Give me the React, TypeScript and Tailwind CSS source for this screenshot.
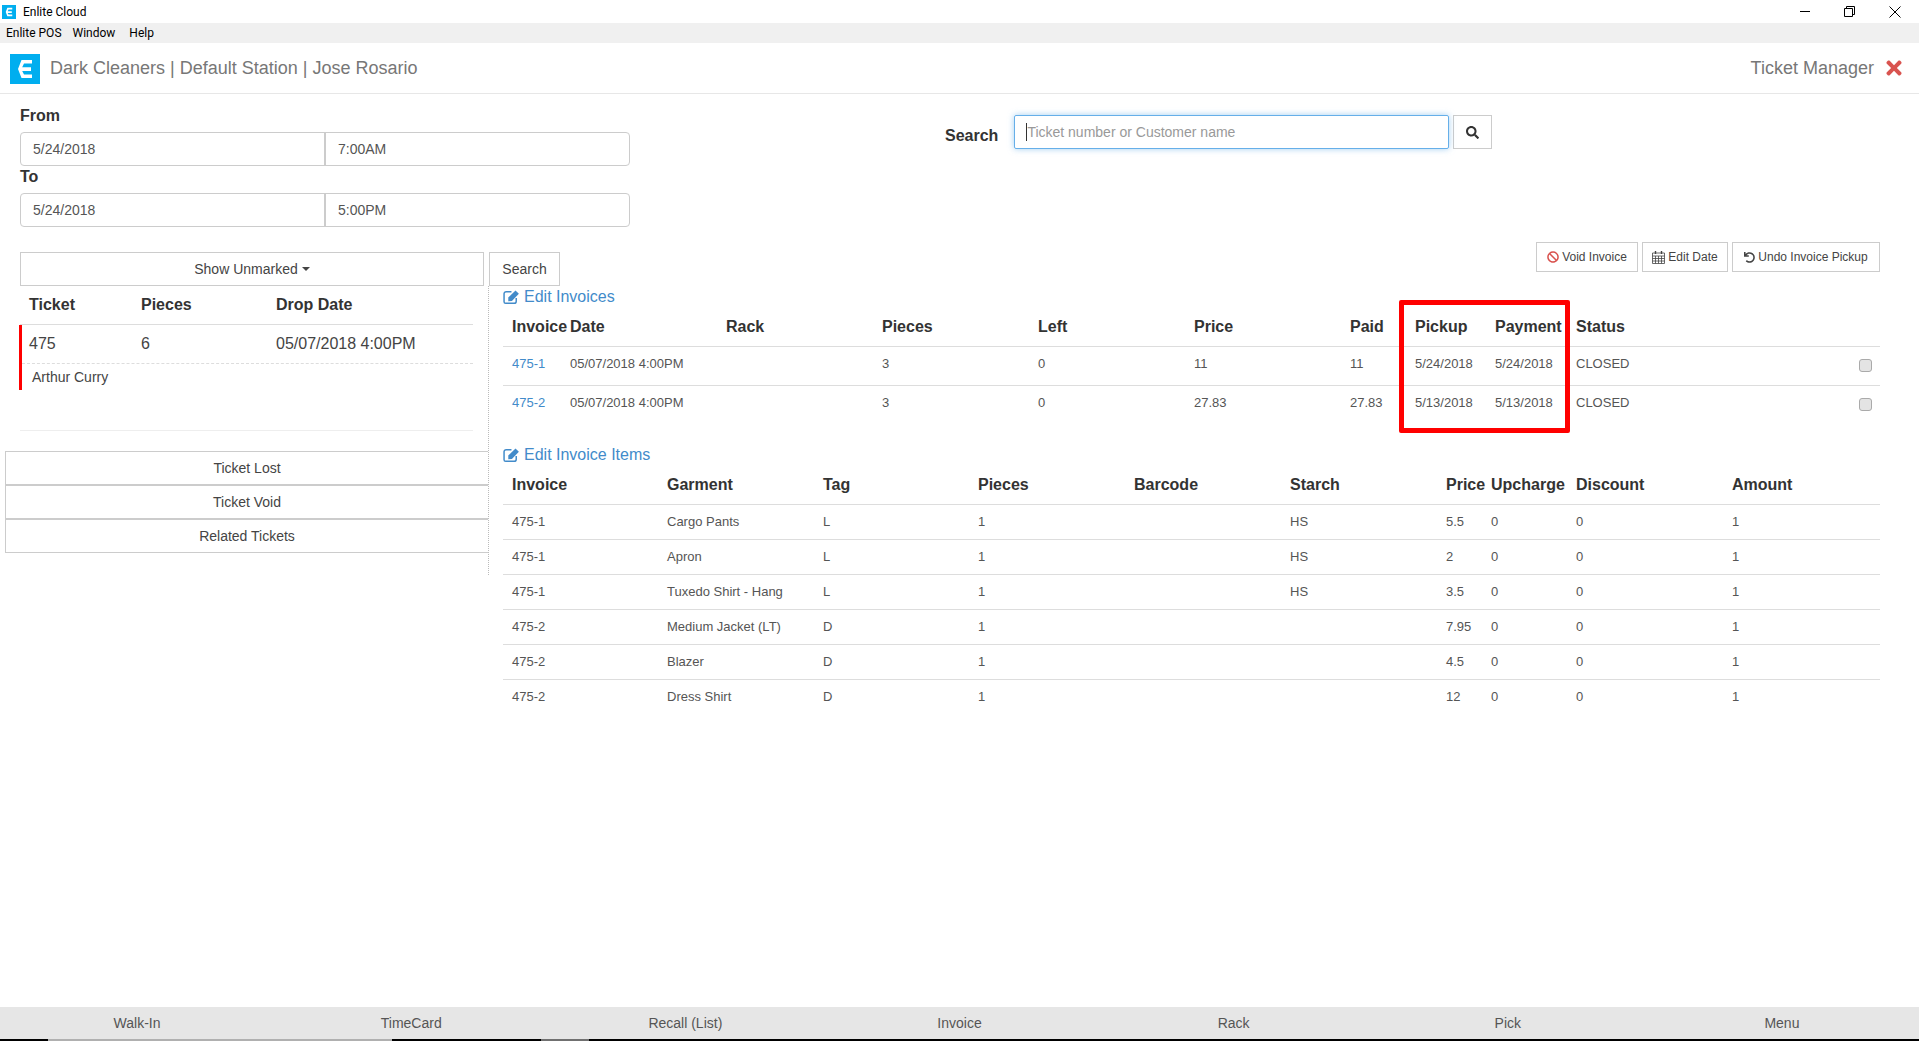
import { FaBan, FaSearch, FaTimes, FaUndo } from "react-icons/fa";

const invoices = [
  { id: "475-1", date: "05/07/2018 4:00PM", pieces: "3", left: "0", price: "11", paid: "11", pickup: "5/24/2018", payment: "5/24/2018" },
  { id: "475-2", date: "05/07/2018 4:00PM", pieces: "3", left: "0", price: "27.83", paid: "27.83", pickup: "5/13/2018", payment: "5/13/2018" },
];

const items = [
  { id: "475-1", garment: "Cargo Pants", tag: "L", starch: "HS", price: "5.5" },
  { id: "475-1", garment: "Apron", tag: "L", starch: "HS", price: "2" },
  { id: "475-1", garment: "Tuxedo Shirt - Hang", tag: "L", starch: "HS", price: "3.5" },
  { id: "475-2", garment: "Medium Jacket (LT)", tag: "D", starch: "", price: "7.95" },
  { id: "475-2", garment: "Blazer", tag: "D", starch: "", price: "4.5" },
  { id: "475-2", garment: "Dress Shirt", tag: "D", starch: "", price: "12" },
];

const invoiceCols = "grid grid-cols-[58px_156px_156px_156px_156px_156px_65px_80px_81px_1fr] pl-[9px]";
const itemCols = "grid grid-cols-[155px_156px_155px_156px_156px_156px_45px_85px_156px_1fr] pl-[9px]";

function Logo({ size }: { size: number }) {
  return (
    <svg width={size} height={size} viewBox="0 0 30 30" className="shrink-0">
      <rect width="30" height="30" fill="#00aeef" />
      <path d="M22 6H11.5L8 15l3.5 9H22v-3.6H14L12.2 17H21v-3.8h-8.8L14 9.600h8z" fill="#fff" />
    </svg>
  );
}

function EditIcon() {
  return (
    <svg width="18" height="16" viewBox="0 0 17 14" className="shrink-0">
      <path d="M8 2H3a2 2 0 0 0-2 2v7.500a1.500 1.500 0 0 0 1.500 1.500h8a2 2 0 0 0 2-2V8" fill="none" stroke="currentColor" strokeWidth="1.4" />
      <path d="M5 7.500 11.800.9 15 4 8.400 10.800 5 11z" fill="currentColor" />
    </svg>
  );
}

function CalendarIcon() {
  return (
    <svg width="13" height="13" viewBox="0 0 13 13" fill="none" stroke="#444" className="shrink-0">
      <path d="M.5 2h12v10.500H.5zM.5 5h12M.5 7.500h12M.5 10h12M3.500 5v7.500M6.500 5v7.500M9.500 5v7.500" strokeWidth="0.8" />
      <path d="M3.500 0v3M9.500 0v3" strokeWidth="1.4" />
    </svg>
  );
}

function DateRange({ label, date, time }: { label: string; date: string; time: string }) {
  return (
    <div>
      <div className="h-5 pt-px text-base leading-5 font-bold text-[#333]">{label}</div>
      <div className="mt-[7px] flex h-[34px] w-[610px] rounded border border-[#ccc] text-sm text-[#555]">
        <input readOnly defaultValue={date} className="w-[305px] border-r-2 border-[#ccc] pl-3 outline-none" />
        <input readOnly defaultValue={time} className="flex-1 pl-3 outline-none" />
      </div>
    </div>
  );
}

function SideButton({ children }: { children: string }) {
  return (
    <button className="h-[34px] border-y border-l border-[#ccc] text-sm text-[#444]">
      {children}
    </button>
  );
}

function ActionButton({ icon, label, width }: { icon: React.ReactNode; label: string; width: string }) {
  return (
    <button className={`flex h-[30px] items-center justify-center gap-[3px] border border-[#ccc] text-xs text-[#444] ${width}`}>
      {icon}
      {label}
    </button>
  );
}

export default function App() {
  return (
    <div className="flex h-[1041px] flex-col overflow-hidden bg-white font-['Liberation_Sans',sans-serif] text-[#333]">
      {/* window chrome */}
      <div className="flex h-[23px] items-center font-['Roboto',sans-serif] text-xs text-black">
        <div className="ml-[2px]">
          <Logo size={14} />
        </div>
        <span className="ml-[7px] flex-1">Enlite Cloud</span>
        <div className="flex items-center gap-[34px] pr-[18px]">
          <span className="h-px w-[10px] bg-black" />
          <svg width="11" height="11" viewBox="0 0 11 11" fill="none" stroke="#000">
            <path d="M.5 2.500h8v8h-8zM2.500 2.500v-2h8v8h-2" />
          </svg>
          <svg width="12" height="12" viewBox="0 0 12 12" fill="none" stroke="#000">
            <path d="M.5.5l11 11M11.500.5l-11 11" />
          </svg>
        </div>
      </div>
      <div className="flex h-5 items-center gap-[11px] bg-[#f0f0f0] pl-[6px] font-['Roboto',sans-serif] text-xs text-black">
        <span>Enlite POS</span>
        <span>Window</span>
        <span className="ml-[3px]">Help</span>
      </div>

      {/* header */}
      <div className="flex h-[51px] shrink-0 items-center border-b border-[#e7e7e7] pr-[14px] pl-[10px] text-lg text-[#777]">
        <div className="mt-[2px]">
          <Logo size={30} />
        </div>
        <span className="ml-[10px] flex-1">Dark Cleaners | Default Station | Jose Rosario</span>
        <span>Ticket Manager</span>
        <FaTimes className="ml-[9px] text-[#d9534f]" size={22} />
      </div>

      {/* date range + search */}
      <div className="flex shrink-0 pt-[11px] pl-5">
        <div className="flex flex-col">
          <DateRange label="From" date="5/24/2018" time="7:00AM" />
          <DateRange label="To" date="5/24/2018" time="5:00PM" />
        </div>
        <div className="ml-[315px] flex">
          <span className="mt-[21px] text-base leading-5 font-bold">Search</span>
          <div className="relative mt-[10px] ml-[16px] h-[34px]">
            <input
              readOnly
              placeholder="Ticket number or Customer name"
              className="h-[34px] w-[435px] rounded-[2px] border border-[#66afe9] pl-3 text-sm shadow-[0_0_6px_rgba(102,175,233,0.6)] outline-none placeholder:text-[#999]"
            />
            <span className="absolute top-[8px] left-[12px] h-[18px] w-px bg-[#333]" />
          </div>
          <button className="mt-[10px] ml-[4px] flex h-[34px] w-[39px] items-center justify-center border border-[#ccc]">
            <FaSearch size={13} className="text-[#333]" />
          </button>
        </div>
      </div>

      {/* body */}
      <div className="flex flex-1">
        <div className="flex w-[489px] shrink-0 flex-col pt-[25px]">
          <div className="ml-5 flex h-[34px] w-[464px] items-center justify-center gap-1 border border-[#ccc] text-sm text-[#444]">
            Show Unmarked
            <span className="border-x-4 border-t-4 border-x-transparent border-t-[#444]" />
          </div>
          <div className="flex h-[289px] flex-col border-r border-dotted border-[#bbb]">
            <div className="mr-[15px] ml-5">
              <div className="grid h-[39px] grid-cols-[112px_135px_1fr] items-center border-b border-[#ddd] pb-[1px] pl-[9px] text-base font-bold">
                <span>Ticket</span>
                <span>Pieces</span>
                <span>Drop Date</span>
              </div>
              <div className="-ml-px h-[65px] border-l-[3px] border-[#f00]">
                <div className="grid h-[39px] grid-cols-[112px_135px_1fr] items-center border-b border-dashed border-[#ddd] pl-[7px] text-base text-[#444]">
                  <span>475</span>
                  <span>6</span>
                  <span>05/07/2018 4:00PM</span>
                </div>
                <div className="pt-[3px] pl-[10px] text-sm text-[#444]">Arthur Curry</div>
              </div>
              <div className="mt-[40px] border-b border-[#eee]" />
            </div>
            <div className="mt-[20px] ml-[5px] flex flex-col">
              <SideButton>Ticket Lost</SideButton>
              <SideButton>Ticket Void</SideButton>
              <SideButton>Related Tickets</SideButton>
            </div>
          </div>
        </div>

        <div className="w-[1391px] pt-[15px]">
          <div className="flex h-[44px] items-start justify-between">
            <button className="mt-[10px] h-[34px] w-[71px] border border-[#ccc] text-sm text-[#444]">Search</button>
            <div className="flex gap-1">
              <ActionButton icon={<FaBan size={12} className="text-[#d9534f]" />} label="Void Invoice" width="w-[102px]" />
              <ActionButton icon={<CalendarIcon />} label="Edit Date" width="w-[86px]" />
              <ActionButton icon={<FaUndo size={11} />} label="Undo Invoice Pickup" width="w-[148px]" />
            </div>
          </div>

          <div className="relative ml-[14px] w-[1377px]">
            <div className="flex h-[22px] items-center gap-[3px] text-base text-[#428bca]">
              <EditIcon />
              Edit Invoices
            </div>
            <div className={`${invoiceCols} h-[39px] items-center border-b border-[#ddd] text-base font-bold`}>
              <span>Invoice</span>
              <span>Date</span>
              <span>Rack</span>
              <span>Pieces</span>
              <span>Left</span>
              <span>Price</span>
              <span>Paid</span>
              <span>Pickup</span>
              <span>Payment</span>
              <span>Status</span>
            </div>
            {invoices.map((row, i) => (
              <div
                key={row.id}
                className={`${invoiceCols} h-[39px] pt-[8px] text-[13px] leading-[18px] text-[#555] ${i === 0 ? "border-b border-[#ddd]" : ""}`}
              >
                <span className="text-[#428bca]">{row.id}</span>
                <span>{row.date}</span>
                <span />
                <span>{row.pieces}</span>
                <span>{row.left}</span>
                <span>{row.price}</span>
                <span>{row.paid}</span>
                <span>{row.pickup}</span>
                <span>{row.payment}</span>
                <span className="flex justify-between pr-[8px]">
                  CLOSED
                  <span className="mt-[4px] h-[13px] w-[13px] rounded-[3px] border border-[#aaa] bg-[#e4e4e4]" />
                </span>
              </div>
            ))}

            {/* red highlight drawn over the screenshot */}
            <div className="absolute top-[14px] left-[896px] h-[133px] w-[171px] rounded-[2px] border-[5px] border-[#f00]" />

            <div className="mt-[19px] flex h-[22px] items-center gap-[3px] text-base text-[#428bca]">
              <EditIcon />
              Edit Invoice Items
            </div>
            <div className={`${itemCols} h-[39px] items-center border-b border-[#ddd] pb-[1px] text-base font-bold`}>
              <span>Invoice</span>
              <span>Garment</span>
              <span>Tag</span>
              <span>Pieces</span>
              <span>Barcode</span>
              <span>Starch</span>
              <span>Price</span>
              <span>Upcharge</span>
              <span>Discount</span>
              <span>Amount</span>
            </div>
            {items.map((row, i) => (
              <div
                key={row.garment}
                className={`${itemCols} h-[35px] pt-[8px] text-[13px] leading-[18px] text-[#555] ${i < items.length - 1 ? "border-b border-[#ddd]" : ""}`}
              >
                <span>{row.id}</span>
                <span>{row.garment}</span>
                <span>{row.tag}</span>
                <span>1</span>
                <span />
                <span>{row.starch}</span>
                <span>{row.price}</span>
                <span>0</span>
                <span>0</span>
                <span>1</span>
              </div>
            ))}
          </div>
        </div>
      </div>

      {/* bottom nav */}
      <div className="grid h-[32px] shrink-0 grid-cols-7 items-center bg-[#e6e6e6] text-center text-sm text-[#555]">
        <span>Walk-In</span>
        <span>TimeCard</span>
        <span>Recall (List)</span>
        <span>Invoice</span>
        <span>Rack</span>
        <span>Pick</span>
        <span>Menu</span>
      </div>
      <div className="flex h-[2px] shrink-0 bg-black">
        <span className="ml-12 w-[344px] bg-[#b0b0b0]" />
        <span className="ml-[149px] w-12 bg-[#707070]" />
      </div>
    </div>
  );
}
